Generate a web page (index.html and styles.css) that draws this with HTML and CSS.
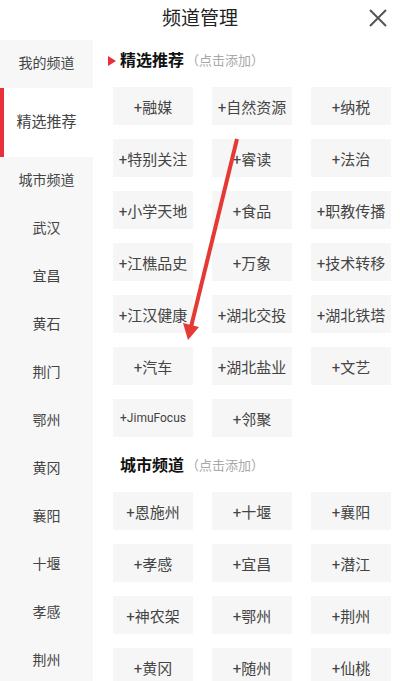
FILE: index.html
```html
<!DOCTYPE html>
<html lang="zh-CN">
<head>
    <meta charset="UTF-8">
    <meta name="viewport" content="width=device-width, initial-scale=1.0">
    <title>频道管理</title>
    <link rel="stylesheet" href="styles.css">
</head>
<body>
    <div class="page">
        <header class="top">
            <h1>频道管理</h1>
            <svg class="close" width="18" height="18" viewBox="0 0 18 18">
                <path d="M1 1 L17 17 M17 1 L1 17" stroke="#555" stroke-width="2" fill="none"/>
            </svg>
        </header>

        <div class="body">
            <nav class="side">
                <div class="side-item">我的频道</div>
                <div class="side-item active">精选推荐</div>
                <div class="side-item">城市频道</div>
                <div class="side-item">武汉</div>
                <div class="side-item">宜昌</div>
                <div class="side-item">黄石</div>
                <div class="side-item">荆门</div>
                <div class="side-item">鄂州</div>
                <div class="side-item">黄冈</div>
                <div class="side-item">襄阳</div>
                <div class="side-item">十堰</div>
                <div class="side-item">孝感</div>
                <div class="side-item">荆州</div>
            </nav>

            <main class="main">
                <section class="section">
                    <div class="section-title mark">精选推荐<span class="hint">（点击添加）</span></div>
                    <div class="chips">
                        <div class="chip">+融媒</div>
                        <div class="chip">+自然资源</div>
                        <div class="chip">+纳税</div>
                        <div class="chip">+特别关注</div>
                        <div class="chip">+睿读</div>
                        <div class="chip">+法治</div>
                        <div class="chip">+小学天地</div>
                        <div class="chip">+食品</div>
                        <div class="chip">+职教传播</div>
                        <div class="chip">+江樵品史</div>
                        <div class="chip">+万象</div>
                        <div class="chip">+技术转移</div>
                        <div class="chip">+江汉健康</div>
                        <div class="chip">+湖北交投</div>
                        <div class="chip">+湖北铁塔</div>
                        <div class="chip">+汽车</div>
                        <div class="chip">+湖北盐业</div>
                        <div class="chip">+文艺</div>
                        <div class="chip small">+JimuFocus</div>
                        <div class="chip">+邻聚</div>
                    </div>
                </section>

                <section class="section city">
                    <div class="section-title">城市频道<span class="hint">（点击添加）</span></div>
                    <div class="chips">
                        <div class="chip">+恩施州</div>
                        <div class="chip">+十堰</div>
                        <div class="chip">+襄阳</div>
                        <div class="chip">+孝感</div>
                        <div class="chip">+宜昌</div>
                        <div class="chip">+潜江</div>
                        <div class="chip">+神农架</div>
                        <div class="chip">+鄂州</div>
                        <div class="chip">+荆州</div>
                        <div class="chip">+黄冈</div>
                        <div class="chip">+随州</div>
                        <div class="chip">+仙桃</div>
                    </div>
                </section>
            </main>
        </div>

        <!-- annotation arrow drawn over the list -->
        <svg class="arrow" width="400" height="681" viewBox="0 0 400 681">
            <line x1="237" y1="139" x2="191" y2="327" stroke="#e53935" stroke-width="4"/>
            <polygon points="188,340 183,323 199,327" fill="#e53935"/>
        </svg>
    </div>
</body>
</html>
```

FILE: styles.css
```css
html, body {
    margin: 0;
    padding: 0;
}

body {
    font-family: Roboto, "Noto Sans CJK SC", sans-serif;
    color: #444;
    background: #fff;
}

.page {
    position: relative;
    width: 400px;
    height: 681px;
    overflow: hidden;
}

.top {
    height: 40px;
    display: flex;
    align-items: center;
    justify-content: center;
    position: relative;
}

.top h1 {
    margin: 0;
    font-size: 19px;
    font-weight: normal;
    color: #222;
    line-height: 1;
    margin-top: -4px;
}

.close {
    position: absolute;
    right: 13px;
    top: 9px;
}

.body {
    display: flex;
}

.side {
    width: 93px;
    flex-shrink: 0;
    background: #f7f7f7;
}

.side-item {
    height: 48px;
    box-sizing: border-box;
    padding-bottom: 4px;
    display: flex;
    align-items: center;
    justify-content: center;
    font-size: 14px;
    color: #444;
}

.side-item.active {
    height: 69px;
    background: #fff;
    font-size: 15px;
    position: relative;
}

.side-item.active::before {
    content: "";
    position: absolute;
    left: 0;
    top: 0;
    bottom: 0;
    width: 4px;
    background: #e8303a;
}

.main {
    flex: 1;
    padding-left: 20px;
}

.section-title {
    font-size: 16px;
    font-weight: bold;
    color: #111;
    line-height: 22px;
    padding: 10px 0 15px 7px;
    display: flex;
    align-items: center;
}

.section-title.mark {
    padding-left: 0;
    margin-left: -5px;
}

.section-title.mark::before {
    content: "";
    width: 0;
    height: 0;
    border-top: 5px solid transparent;
    border-bottom: 5px solid transparent;
    border-left: 8px solid #e8303a;
    margin-right: 4px;
}

.hint {
    font-size: 13px;
    font-weight: normal;
    color: #a8a8a8;
    margin-left: 2px;
}

.section.city {
    margin-top: 8px;
}

.chips {
    display: grid;
    grid-template-columns: repeat(3, 80px);
    column-gap: 19px;
    row-gap: 14px;
}

.chip {
    height: 38px;
    background: #f6f6f6;
    display: flex;
    align-items: center;
    justify-content: center;
    font-size: 15px;
    color: #444;
    white-space: nowrap;
}

.chip.small {
    font-size: 12px;
}

.arrow {
    position: absolute;
    left: 0;
    top: 0;
    pointer-events: none;
}
```
